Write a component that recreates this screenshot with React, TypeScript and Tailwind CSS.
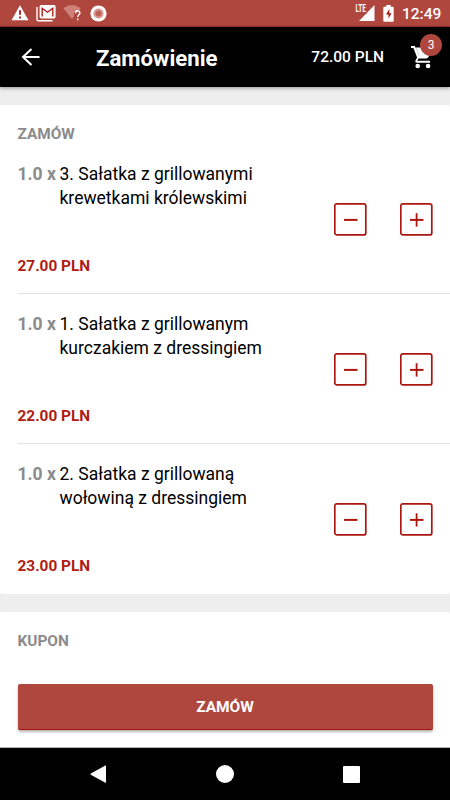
import React from "react";

type Item = { first: string; second: string; price: string };

const items: Item[] = [
  { first: "3. Sałatka z grillowanymi", second: "krewetkami królewskimi", price: "27.00 PLN" },
  { first: "1. Sałatka z grillowanym", second: "kurczakiem z dressingiem", price: "22.00 PLN" },
  { first: "2. Sałatka z grillowaną", second: "wołowiną z dressingiem", price: "23.00 PLN" },
];

function StatusBar() {
  return (
    <div className="flex h-[27px] shrink-0 items-center border-b border-[#93362f] bg-[#b0473f] pr-[9px] pl-[11px] text-white">
      <svg className="h-4 w-[18px]" viewBox="0 0 18 16">
        <path d="M9 .3 17.5 15.3H.5z" fill="#fff" />
        <path d="M9 5.2v4.6M9 11.4v2" stroke="#a9120c" strokeWidth="1.8" />
      </svg>
      <svg className="ml-[7px] h-[18px] w-5" viewBox="0 0 20 18">
        <path d="M1 3v12.5a1.3 1.3 0 0 0 1.3 1.3H16.5" fill="none" stroke="#fff" strokeWidth="1.4" />
        <rect x="3.6" y="1" width="16" height="13.4" rx="1.6" fill="#fff" />
        <path d="M6.2 12.6V4.2l5.3 4 5.3-4v8.4" fill="none" stroke="#a9120c" strokeWidth="1.3" />
      </svg>
      <svg className="ml-[7px] h-[18px] w-[19px]" viewBox="0 0 19 18">
        <path d="M.2 4.3Q8.8-2.3 17.8 4.3L14.9 8H11v4.4L9 15z" fill="#cf8078" />
        <path d="M12.5 9.2c.1-3.3 4.7-3 4.4-.1-.2 1.6-2.3 1.7-2.2 4M14.7 14.4v1.8" fill="none" stroke="#fff" strokeWidth="1.4" />
      </svg>
      <svg className="ml-[8px] h-[17px] w-[17px]" viewBox="0 0 17 17">
        <circle cx="8.5" cy="8.5" r="8.1" fill="#fff" />
        <circle cx="8.5" cy="8.5" r="5.1" fill="#d99a95" />
        <circle cx="8.5" cy="8.5" r="3" fill="#bd625b" />
      </svg>
      <svg className="ml-auto h-[24px] w-5 overflow-visible" viewBox="0 -3 20 24">
        <path d="M19.5 1v16H4z" fill="#fff" />
        <path d="M0 0H11.5V10H0z" fill="#b0473f" />
        <text x=".4" y="8.4" textLength="10.4" lengthAdjust="spacingAndGlyphs" fill="#fff" className="font-[Roboto] text-[10px] font-bold">LTE</text>
      </svg>
      <svg className="ml-2 h-[17px] w-[11px]" viewBox="0 0 11 17">
        <path d="M3.3 0h4.4v1.7h2q1 0 1 1v13q0 1-1 1H1.3q-1 0-1-1v-13q0-1 1-1h2z" fill="#fff" />
        <path d="M6.3 4 3.1 9.5h2.4v4.1l3.1-5.4H6.3z" fill="#a9120c" />
      </svg>
      <span className="ml-[8px] w-[39px] whitespace-nowrap pt-[2px] text-[15.5px] leading-[25px] font-medium">12:49</span>
    </div>
  );
}

function Header() {
  return (
    <header className="z-10 flex h-[60px] shrink-0 items-center bg-black pl-[21px] text-white shadow-[0_1px_4px_rgba(0,0,0,0.4)]">
      <svg className="h-[18px] w-[19px]" viewBox="0 0 19 18">
        <path d="M18.5 9H2M10.5 1 2 9l8.5 8" fill="none" stroke="#fff" strokeWidth="2" />
      </svg>
      <h1 className="ml-14 pt-0.5 text-[22.2px] leading-7 font-bold">Zamówienie</h1>
      <span className="ml-auto pt-px text-[15.5px] font-medium">72.00 PLN</span>
      <div className="relative mr-[17px] ml-[27px] h-6 w-[22px]">
        <svg className="h-6 w-[22px]" viewBox="0 0 22 24">
          <path d="M0 1h3.8L8.6 11h7.3l3.8-7h1.8l-4.2 8.3q-.6 1.1-1.9 1.1H7.6l-1.4 2.3H19v2H5.8Q3.7 17.7 4.5 15.6l1.6-3L2.4 3H0z" fill="#fff" />
          <path d="M4.5 2.5H18l-2.2 9H8.6z" fill="#fff" />
          <circle cx="6.7" cy="21" r="2.3" fill="#fff" />
          <circle cx="17.1" cy="21" r="2.3" fill="#fff" />
        </svg>
        <span className="absolute -top-[11px] left-[9px] flex h-[22px] w-[22px] items-center justify-center rounded-full bg-[#b0473f] text-[12px]">3</span>
      </div>
    </header>
  );
}

function QuantityButton({ plus = false }: { plus?: boolean }) {
  return (
    <button aria-label={plus ? "+" : "−"} className="h-[33px] w-[33px]">
      <svg className="h-[33px] w-[33px]" viewBox="0 0 33 33" fill="none" stroke="#ab1710">
        <rect x=".8" y=".9" width="31" height="31" rx="2" strokeWidth="1.7" />
        <path d="M10 16.9h13.5" strokeWidth="2" />
        {plus && <path d="M16.6 10.2v13.4" strokeWidth="1.8" />}
      </svg>
    </button>
  );
}

function OrderItem({ item, last }: { item: Item; last: boolean }) {
  return (
    <div className={`ml-[17.5px] flex h-[150px] justify-between pr-[17.5px] ${last ? "" : "border-b border-[#e2e2e2]"}`}>
      <div className="flex flex-col pt-[18px]">
        <div className="flex text-[17.5px] leading-6">
          <span className="w-[42px] font-bold text-[#8b8b8b]">1.0 x</span>
          <p className="whitespace-nowrap text-black">
            {item.first}
            <br />
            {item.second}
          </p>
        </div>
        <span className="mt-[46px] text-[15.4px] leading-5 font-bold text-[#b01c12]">{item.price}</span>
      </div>
      <div className="mt-[59px] flex gap-[33px]">
        <QuantityButton />
        <QuantityButton plus />
      </div>
    </div>
  );
}

export default function App() {
  return (
    <div className="flex h-[800px] w-[450px] flex-col overflow-hidden bg-[#eeeeee] font-[Roboto,sans-serif]">
      <StatusBar />
      <Header />
      <section className="mt-[18px] h-[489px] shrink-0 rounded-[2px] bg-white">
        <h2 className="h-[39px] pt-[19px] pl-[17.5px] text-[15.4px] leading-5 font-bold text-[#8b8b8b]">ZAMÓW</h2>
        {items.map((item, i) => (
          <OrderItem key={item.first} item={item} last={i === items.length - 1} />
        ))}
      </section>
      <section className="mt-[18px] h-[135px] shrink-0 rounded-t-[2px] bg-white px-[17.5px] pt-[19px]">
        <h2 className="text-[15.4px] leading-5 font-bold text-[#8b8b8b]">KUPON</h2>
        <button className="mt-[33px] block h-[46px] w-full rounded-[2px] border-b border-[#a9120c] bg-[#b0473f] pt-[3px] text-[15.5px] font-bold text-white shadow-[0_2px_3px_rgba(0,0,0,0.3)]">ZAMÓW</button>
      </section>
      <nav className="flex h-[53px] shrink-0 items-center justify-between border-t border-[#b5b5b5] bg-black pr-[90px] pl-[90px]">
        <svg className="h-[18px] w-4" viewBox="0 0 16 18">
          <path d="M16 .7v16.8q0 .5-.6.2L.8 9.7Q.2 9.1.8 8.5L15.4.4q.6-.3.6.3z" fill="#fff" />
        </svg>
        <div className="h-[18px] w-[18px] rounded-full bg-white" />
        <div className="h-[17px] w-[17px] rounded-[1px] bg-white" />
      </nav>
    </div>
  );
}
